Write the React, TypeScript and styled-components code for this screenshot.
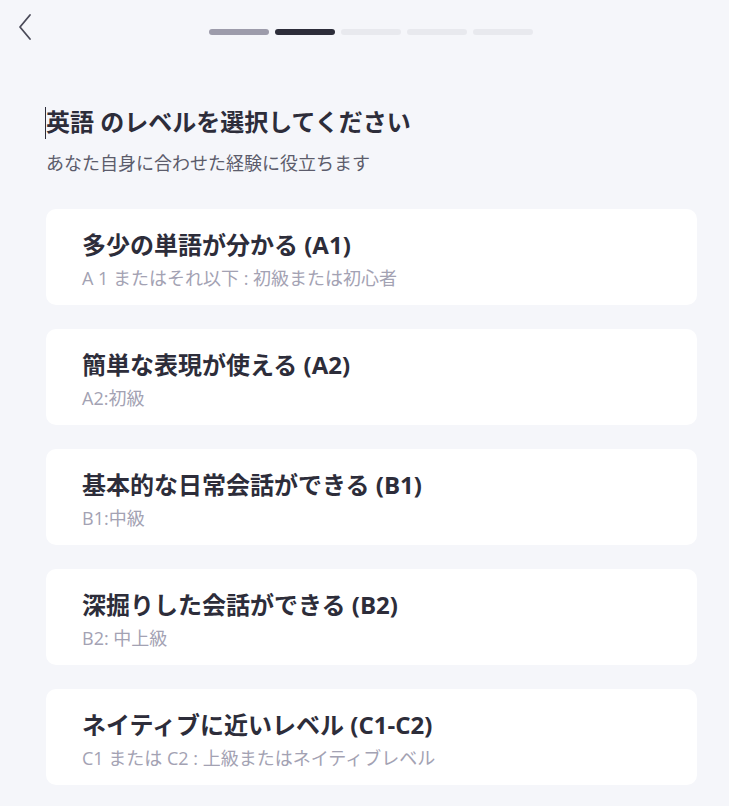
import React from "react";
import styled, { createGlobalStyle } from "styled-components";

const GlobalStyle = createGlobalStyle`
  html, body {
    margin: 0;
    padding: 0;
    background: #f5f6fa;
  }
  body {
    font-family: "Open Sans", "Noto Sans CJK JP", sans-serif;
    color: #2d2d3a;
  }
`;

const Page = styled.div`
  min-height: 806px;
  box-sizing: border-box;
  padding: 0 32px 20px 46px;
`;

const TopBar = styled.div`
  position: relative;
  height: 64px;
  display: flex;
  justify-content: center;
  align-items: flex-start;
  padding: 29px 0 0 13px;
  box-sizing: border-box;
  margin-left: -46px;
  margin-right: -32px;
`;

const BackButton = styled.button`
  position: absolute;
  left: 12px;
  top: 12px;
  width: 26px;
  height: 30px;
  border: 0;
  padding: 0;
  background: transparent;
  display: flex;
  align-items: center;
  justify-content: center;
  cursor: pointer;
`;

const Steps = styled.div`
  display: flex;
  gap: 6px;
`;

const Step = styled.div<{ $state: "done" | "current" | "todo" }>`
  width: 60px;
  height: 6px;
  border-radius: 3px;
  background: ${(p) =>
    p.$state === "done" ? "#9d9cab" : p.$state === "current" ? "#2d2d3a" : "#e8e9ee"};
`;

const Heading = styled.h1`
  position: relative;
  margin: 42px 0 0;
  font-size: 24px;
  line-height: 32px;
  font-weight: 700;
  color: #2d2d3a;
`;

const Caret = styled.span`
  position: absolute;
  left: -1px;
  top: 1px;
  width: 1px;
  height: 32px;
  background: #2d2d3a;
`;

const Lead = styled.p`
  margin: 12px 0 0;
  font-size: 18px;
  line-height: 26px;
  color: #5c5c6b;
`;

const List = styled.div`
  margin-top: 33px;
  display: flex;
  flex-direction: column;
  gap: 24px;
`;

const Card = styled.div`
  height: 96px;
  box-sizing: border-box;
  padding: 20px 36px 0;
  background: #ffffff;
  border-radius: 10px;
  cursor: pointer;
`;

const CardTitle = styled.div`
  font-size: 24px;
  line-height: 32px;
  font-weight: 700;
  color: #2d2d3a;
`;

const CardSub = styled.div`
  margin-top: 4px;
  font-size: 18px;
  line-height: 26px;
  color: #a3a2b3;
`;

const levels = [
  { title: "多少の単語が分かる (A1)", sub: "A 1 またはそれ以下 : 初級または初心者" },
  { title: "簡単な表現が使える (A2)", sub: "A2:初級" },
  { title: "基本的な日常会話ができる (B1)", sub: "B1:中級" },
  { title: "深掘りした会話ができる (B2)", sub: "B2: 中上級" },
  { title: "ネイティブに近いレベル (C1-C2)", sub: "C1 または C2 : 上級またはネイティブレベル" },
];

const steps: ("done" | "current" | "todo")[] = ["done", "current", "todo", "todo", "todo"];

export default function App() {
  return (
    <>
      <GlobalStyle />
      <Page>
        <TopBar>
          <BackButton aria-label="戻る">
            <svg width="16" height="28" viewBox="0 0 16 28" fill="none">
              <path d="M13 2 L3 14 L13 26" stroke="#4a4a58" strokeWidth="1.8" strokeLinecap="round" strokeLinejoin="round" />
            </svg>
          </BackButton>
          <Steps>
            {steps.map((s, i) => (
              <Step key={i} $state={s} />
            ))}
          </Steps>
        </TopBar>
        <Heading>
          <Caret />
          英語 のレベルを選択してください
        </Heading>
        <Lead>あなた自身に合わせた経験に役立ちます</Lead>
        <List>
          {levels.map((l) => (
            <Card key={l.title}>
              <CardTitle>{l.title}</CardTitle>
              <CardSub>{l.sub}</CardSub>
            </Card>
          ))}
        </List>
      </Page>
    </>
  );
}
